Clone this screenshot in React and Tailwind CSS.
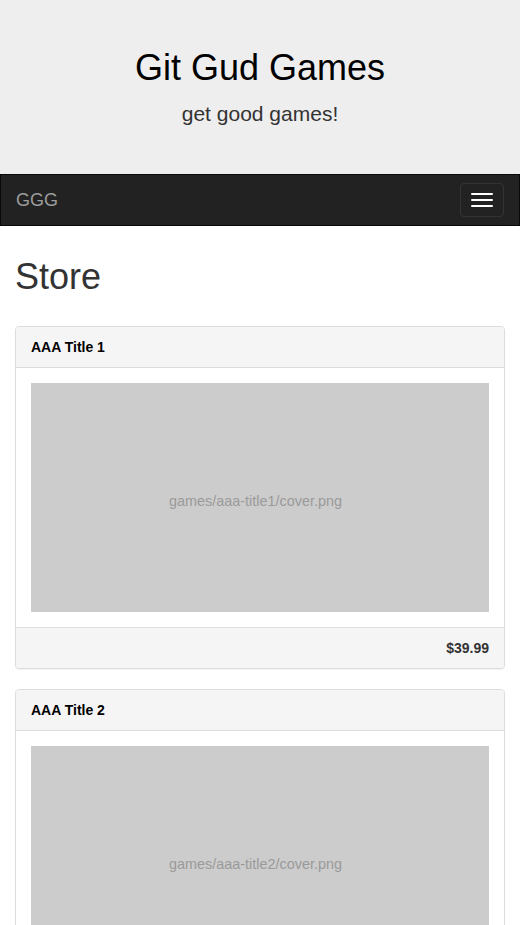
import React from "react";

const games = [
  { title: "AAA Title 1", cover: "games/aaa-title1/cover.png", price: "$39.99" },
  { title: "AAA Title 2", cover: "games/aaa-title2/cover.png", price: "$39.99" },
];

function Panel({ game }) {
  return (
    <div className="mx-[15px] mb-[20px] rounded-[4px] border border-[#dddddd] bg-white shadow-[0_1px_1px_rgba(0,0,0,0.05)]">
      <div className="rounded-t-[3px] border-b border-[#dddddd] bg-[#f5f5f5] px-[15px] py-[10px] text-[14px] font-bold leading-[20px] text-black">
        {game.title}
      </div>
      <div className="p-[15px]">
        <div className="flex h-[229px] items-center justify-center bg-[#cccccc] pt-[9px] pr-[9px] text-[14.4px] text-[#9a9a9a]">
          {game.cover}
        </div>
      </div>
      <div className="rounded-b-[3px] border-t border-[#dddddd] bg-[#f5f5f5] px-[15px] py-[10px] text-right text-[14px] font-bold leading-[20px] text-[#333333]">
        {game.price}
      </div>
    </div>
  );
}

export default function App() {
  return (
    <div className="min-h-[925px] bg-white font-['Liberation_Sans',Arial,sans-serif]">
      <div className="flex h-[174px] flex-col items-center bg-[#eeeeee] pt-[48px]">
        <h1 className="text-[36px] leading-[40px] text-black">Git Gud Games</h1>
        <p className="mt-[11px] text-[21px] leading-[30px] text-[#333333]">get good games!</p>
      </div>
      <nav className="flex h-[52px] items-center justify-between border border-[#080808] bg-[#222222] pl-[15px] pr-[15px]">
        <span className="text-[18px] leading-[20px] text-[#9d9d9d]">GGG</span>
        <button className="flex h-[34px] w-[44px] flex-col items-center justify-center gap-[4px] rounded-[4px] border border-[#333333]">
          <span className="block h-[2px] w-[22px] rounded-[1px] bg-white" />
          <span className="block h-[2px] w-[22px] rounded-[1px] bg-white" />
          <span className="block h-[2px] w-[22px] rounded-[1px] bg-white" />
        </button>
      </nav>
      <h1 className="mt-[31px] px-[15px] text-[36px] leading-[40px] text-[#333333]">Store</h1>
      <div className="mt-[29px]">
        {games.map((g) => (
          <Panel key={g.title} game={g} />
        ))}
      </div>
    </div>
  );
}
